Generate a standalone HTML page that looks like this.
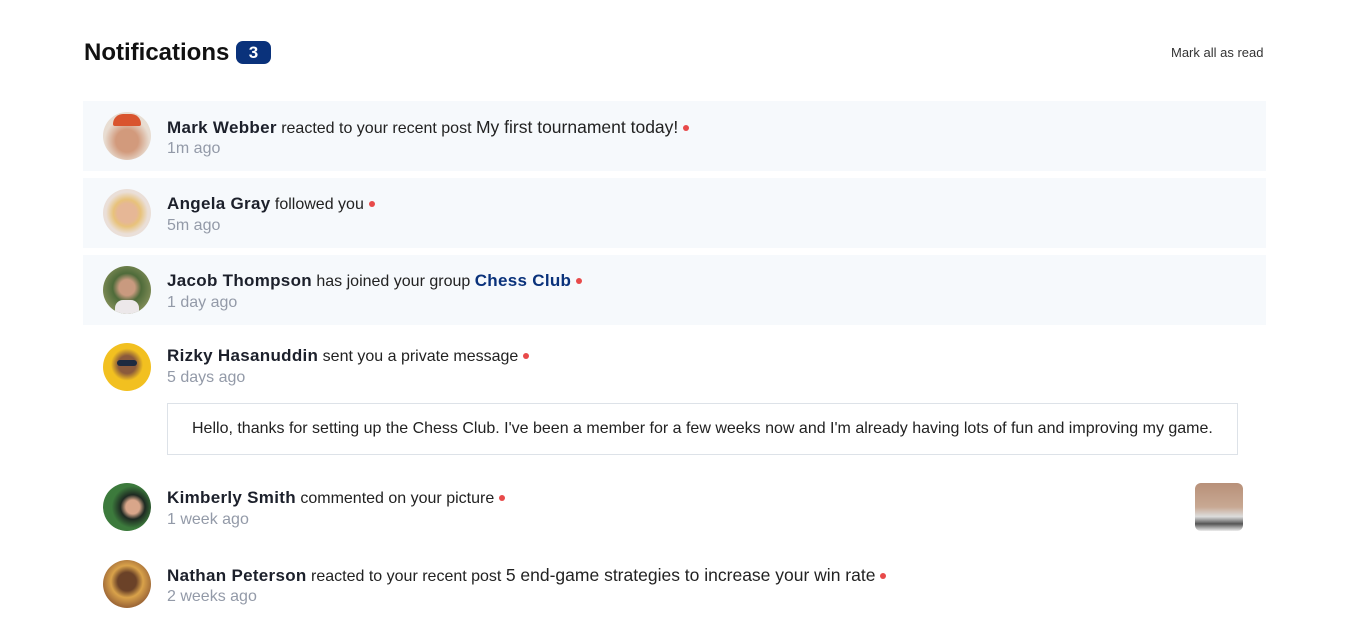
<!DOCTYPE html>
<html><head><style>
body{margin:0;width:1346px;height:618px;background:#fff;font-family:"Liberation Sans",Arial,sans-serif;position:relative;overflow:hidden}
h1{position:absolute;left:84px;top:39px;margin:0;font-size:24px;font-weight:bold;color:#111}
.badge{display:inline-block;background:#0a327b;color:#fff;font-size:17px;border-radius:7px;width:35px;height:23px;line-height:23px;text-align:center;vertical-align:2px;margin-left:0px}
.mark{position:absolute;left:1171px;top:45px;font-size:13px;color:#333}
.row{position:absolute;left:83px;width:1183px;height:70px}
.sh{background:#f6f9fc}
.av{position:absolute;left:20px;width:48px;height:48px;border-radius:50%;overflow:hidden}
.t{position:absolute;left:84px;font-size:16px;color:#222;white-space:nowrap}
.t b{color:#1c202b;letter-spacing:.3px;font-size:17px}
.t i{font-style:normal;font-size:17.5px}
.tm{position:absolute;left:84px;font-size:16px;color:#939aa8}
.dot{display:inline-block;width:6px;height:6px;border-radius:50%;background:#e84a4a;margin-left:5px;vertical-align:2px}
.msg{position:absolute;left:167px;top:403px;width:1071px;height:52px;border:1px solid #dde2e8;font-size:16px;color:#222;line-height:50px;box-sizing:border-box;padding-left:24px}
</style></head><body>
<h1>Notifications <span class="badge">3</span></h1>
<div class="mark">Mark all as read</div>

<div class="row sh" style="top:101px">
<div class="av" style="top:11px;background:radial-gradient(circle at 50% 60%,#d29a7c 30%,#e8ddd2 60%);"><div style="position:absolute;left:10px;top:2px;width:28px;height:12px;background:#d9542e;border-radius:10px 10px 2px 2px"></div></div>
<div class="t" style="top:16px"><b>Mark Webber</b> reacted to your recent post <i>My first tournament today!</i><span class="dot"></span></div>
<div class="tm" style="top:39px">1m ago</div></div>

<div class="row sh" style="top:178px">
<div class="av" style="top:11px;background:radial-gradient(circle at 50% 50%,#e6b796 28%,#e8c27a 40%,#eadfd8 62%)"></div>
<div class="t" style="top:16px"><b>Angela Gray</b> followed you<span class="dot"></span></div>
<div class="tm" style="top:39px">5m ago</div></div>

<div class="row sh" style="top:255px">
<div class="av" style="top:11px;background:radial-gradient(circle at 50% 45%,#c99a7f 22%,#4f6b3a 40%,#7c8a55 70%)"><div style="position:absolute;left:12px;top:34px;width:24px;height:14px;background:#ece8ea;border-radius:8px 8px 0 0"></div></div>
<div class="t" style="top:16px"><b>Jacob Thompson</b> has joined your group <b style="color:#0a327b">Chess Club</b><span class="dot"></span></div>
<div class="tm" style="top:39px">1 day ago</div></div>

<div class="row" style="top:332px">
<div class="av" style="top:11px;background:radial-gradient(circle at 50% 45%,#8b5a3c 25%,#f2c020 45%)"><div style="position:absolute;left:14px;top:17px;width:20px;height:6px;background:#1d2a40;border-radius:3px"></div></div>
<div class="t" style="top:14px"><b>Rizky Hasanuddin</b> sent you a private message<span class="dot"></span></div>
<div class="tm" style="top:37px">5 days ago</div></div>
<div class="msg">Hello, thanks for setting up the Chess Club. I've been a member for a few weeks now and I'm already having lots of fun and improving my game.</div>

<div class="row" style="top:473px">
<div class="av" style="top:10px;background:radial-gradient(circle at 62% 50%,#d9a68a 18%,#1e2a22 32%,#3c7a3c 55%)"></div>
<div class="t" style="top:15px"><b>Kimberly Smith</b> commented on your picture<span class="dot"></span></div>
<div class="tm" style="top:38px">1 week ago</div>
<div style="position:absolute;left:1112px;top:10px;width:48px;height:48px;border-radius:6px;background:linear-gradient(#b89079,#c8a893 50%,#ddd 70%,#555 85%,#eee)"></div></div>

<div class="row" style="top:550px">
<div class="av" style="top:10px;background:radial-gradient(circle at 50% 45%,#6b4228 26%,#d9a24a 45%,#a06a38 70%)"></div>
<div class="t" style="top:15px"><b>Nathan Peterson</b> reacted to your recent post <i>5 end-game strategies to increase your win rate</i><span class="dot"></span></div>
<div class="tm" style="top:38px">2 weeks ago</div></div>
</body></html>
